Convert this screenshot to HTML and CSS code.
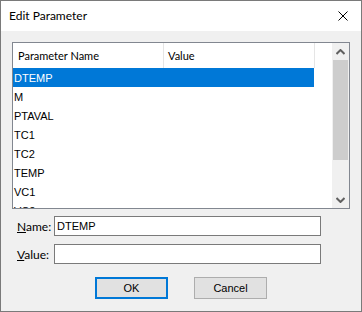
FILE: index.html
```html
<!DOCTYPE html>
<html>
<head>
<meta charset="utf-8">
<link rel="stylesheet" href="styles.css">
</head>
<body>
<div class="window">
  <div class="titlebar">
    <span class="title">Edit Parameter</span>
    <svg class="close" width="10" height="10" viewBox="0 0 10 10"><path d="M0.5 0.5 L9.5 9.5 M9.5 0.5 L0.5 9.5" stroke="#000" stroke-width="1" fill="none"/></svg>
  </div>
  <div class="client">
    <div class="listbox">
      <div class="listview">
        <div class="header">
          <div class="hcol c1">Parameter Name</div>
          <div class="hcol c2">Value</div>
        </div>
        <div class="rows">
          <div class="row selected">DTEMP</div>
          <div class="row">M</div>
          <div class="row">PTAVAL</div>
          <div class="row">TC1</div>
          <div class="row">TC2</div>
          <div class="row">TEMP</div>
          <div class="row">VC1</div>
          <div class="row">VC2</div>
        </div>
      </div>
      <div class="vscroll">
        <div class="sbtn"><svg width="9" height="6" viewBox="0 0 9 6"><path d="M0.5 5 L4.5 1 L8.5 5" stroke="#606060" stroke-width="2" fill="none"/></svg></div>
        <div class="track"><div class="thumb"></div></div>
        <div class="sbtn"><svg width="9" height="6" viewBox="0 0 9 6"><path d="M0.5 1 L4.5 5 L8.5 1" stroke="#606060" stroke-width="2" fill="none"/></svg></div>
      </div>
    </div>
    <div class="fields">
      <div class="field">
        <label class="lbl"><u>N</u>ame:</label>
        <div class="edit">DTEMP</div>
      </div>
      <div class="field">
        <label class="lbl"><u>V</u>alue:</label>
        <div class="edit"></div>
      </div>
    </div>
    <div class="buttons">
      <div class="btn default">OK</div>
      <div class="btn">Cancel</div>
    </div>
  </div>
</div>
</body>
</html>
```
FILE: styles.css
```css
* { box-sizing: border-box; }
html, body { margin: 0; padding: 0; background: #f0f0f0; }
.window {
  width: 362px;
  height: 312px;
  border: 1px solid #7a7a7a;
  background: #f0f0f0;
  display: flex;
  flex-direction: column;
  overflow: hidden;
}
.titlebar {
  height: 30px;
  flex: none;
  background: #fff;
  display: flex;
  align-items: center;
  padding-left: 8px;
  padding-right: 13px;
}
.title {
  font-family: Lato, "Noto Sans", sans-serif;
  font-size: 12px;
  color: #000;
  flex: 1;
  padding-bottom: 1px;
}
.close { display: block; margin-top: -1px; }
.client {
  flex: 1;
  padding: 11px 11px 0 11px;
  display: flex;
  flex-direction: column;
}
.listbox {
  height: 167px;
  border: 1px solid #828790;
  background: #fff;
  display: flex;
}
.listview {
  flex: 1;
  overflow: hidden;
  display: flex;
  flex-direction: column;
}
.header {
  height: 25px;
  flex: none;
  display: flex;
}
.hcol {
  font-family: Lato, "Noto Sans", sans-serif;
  font-size: 11px;
  color: #000;
  display: flex;
  align-items: center;
  border-right: 1px solid #e5e5e5;
  padding-left: 5px;
  padding-bottom: 1px;
}
.c1 { width: 151px; }
.c2 { width: 151px; padding-left: 4px; }
.rows { display: flex; flex-direction: column; }
.row {
  height: 19px;
  width: 301px;
  flex: none;
  font-family: "Liberation Sans", Arial, sans-serif;
  font-size: 11px;
  color: #000;
  display: flex;
  align-items: center;
  padding-left: 1px;
}
.row.selected { background: #0078d7; color: #fff; }
.vscroll {
  width: 17px;
  flex: none;
  background: #f0f0f0;
  display: flex;
  flex-direction: column;
}
.sbtn {
  height: 17px;
  flex: none;
  display: flex;
  align-items: center;
  justify-content: center;
}
.sbtn svg { display: block; }
.track { flex: 1; padding: 0 1px; }
.thumb { height: 100px; background: #cdcdcd; }
.fields {
  margin-top: 7px;
  display: flex;
  flex-direction: column;
  gap: 8px;
}
.field { display: flex; align-items: center; }
.lbl {
  width: 42px;
  padding-left: 5px;
  font-family: Lato, "Noto Sans", sans-serif;
  font-size: 12px;
  color: #000;
}
.edit {
  width: 267px;
  height: 20px;
  border: 1px solid #7a7a7a;
  background: #fff;
  font-family: "Liberation Sans", Arial, sans-serif;
  font-size: 11px;
  color: #000;
  display: flex;
  align-items: center;
  padding-left: 2px;
}
.buttons {
  margin-top: 13px;
  display: flex;
  gap: 26px;
  padding-left: 83px;
}
.btn {
  width: 73px;
  height: 22px;
  border: 1px solid #adadad;
  background: #e1e1e1;
  font-family: "Liberation Sans", Arial, sans-serif;
  font-size: 11px;
  color: #000;
  display: flex;
  align-items: center;
  justify-content: center;
}
.btn.default { border: 2px solid #0078d7; }
```
